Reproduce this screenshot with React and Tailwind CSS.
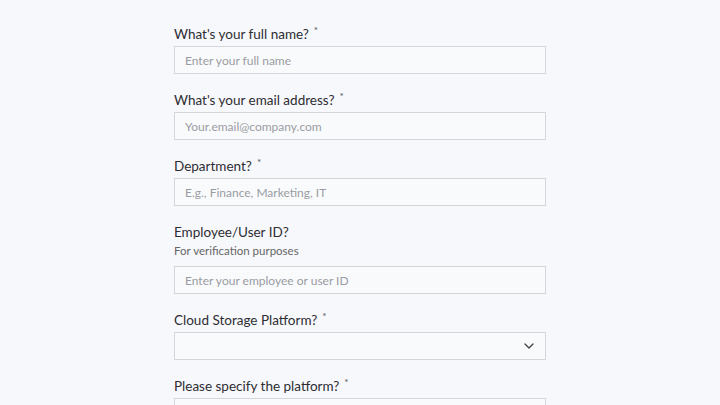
import { ChevronDown } from "lucide-react";

const fields = [
  { label: "What's your full name?", req: true, placeholder: "Enter your full name" },
  { label: "What's your email address?", req: true, placeholder: "Your.email@company.com" },
  { label: "Department?", req: true, placeholder: "E.g., Finance, Marketing, IT" },
  { label: "Employee/User ID?", help: "For verification purposes", placeholder: "Enter your employee or user ID" },
  { label: "Cloud Storage Platform?", req: true, select: true },
  { label: "Please specify the platform?", req: true, placeholder: "" },
];

export default function App() {
  return (
    <div className="h-[405px] overflow-hidden bg-[#f7f8fb] pt-[23px]" style={{ fontFamily: "Lato, 'Noto Sans', sans-serif" }}>
      <div className="w-[372px] ml-[174px] flex flex-col gap-[15px]">
        {fields.map((f, i) => (
          <div key={i} className="flex flex-col">
            <label className="pt-[1px] h-5 text-[13.5px] leading-5 text-[#2d2d33]">
              {f.label}
              {f.req && <sup className="ml-[5px] text-[10px] text-[#555]">*</sup>}
            </label>
            {f.help && <p className="text-[11.5px] leading-5 text-[#666]">{f.help}</p>}
            {f.select ? (
              <div className={`${f.help ? "mt-[5px]" : "mt-[3px]"} h-[28px] border border-[#d4d6da] bg-[#f9fafc] flex items-center justify-end pr-2`}>
                <ChevronDown className="h-4 w-4 text-[#444]" strokeWidth={2} />
              </div>
            ) : (
              <input
                placeholder={f.placeholder}
                className={`${f.help ? "mt-[5px]" : "mt-[3px]"} h-[28px] border border-[#d4d6da] bg-[#f9fafc] px-[10px] text-[12px] text-[#333] placeholder-[#9a9ca3] outline-none`}
              />
            )}
          </div>
        ))}
      </div>
    </div>
  );
}
